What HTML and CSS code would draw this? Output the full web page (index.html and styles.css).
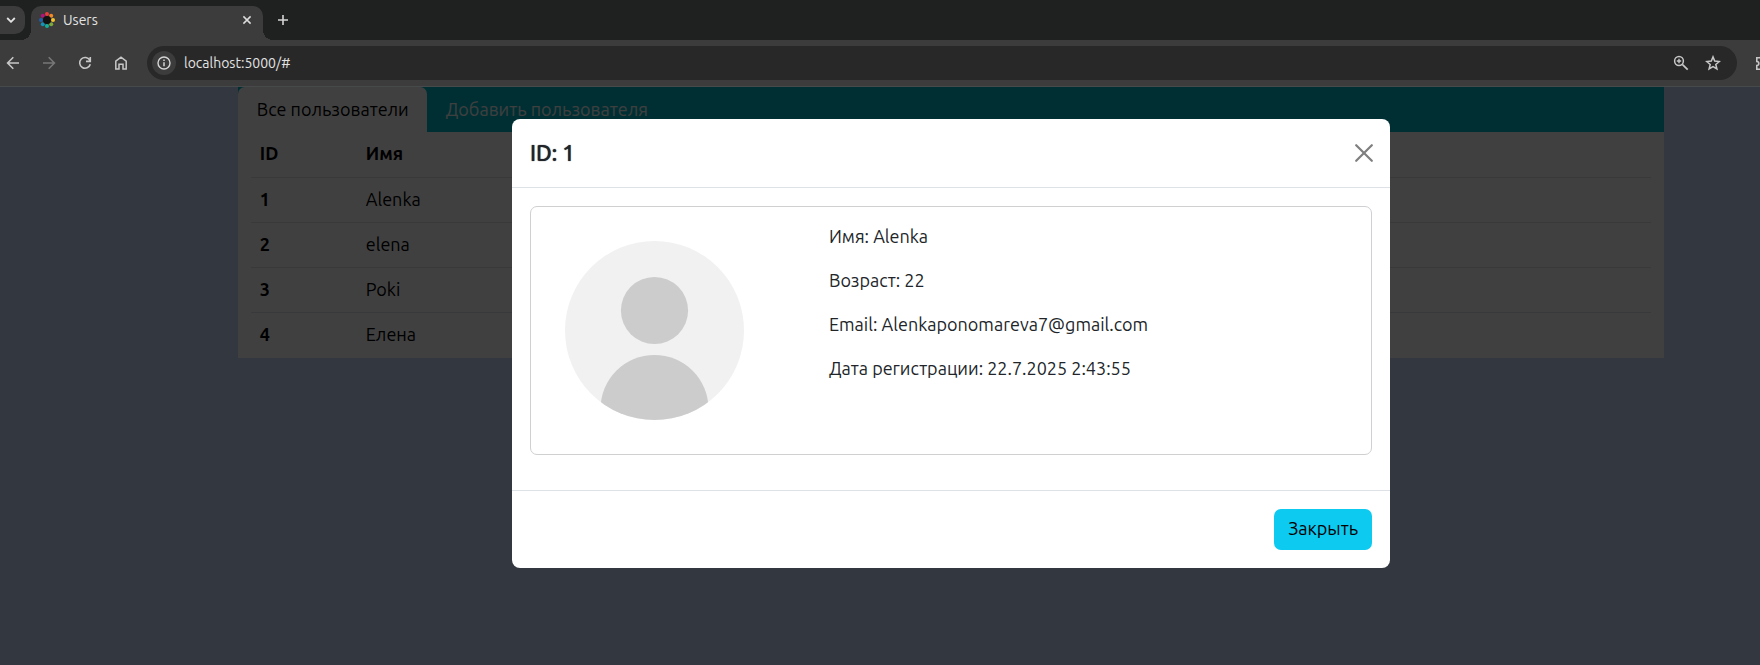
FILE: index.html
```html
<!DOCTYPE html>
<html lang="ru">
<head>
<meta charset="utf-8">
<title>Users</title>
<link rel="stylesheet" href="styles.css">
</head>
<body>
<div class="window">
  <header class="browser">
    <div class="tabstrip">
      <button class="tab-search" aria-label="Поиск вкладок"><svg width="10" height="6" viewBox="0 0 10 6"><path d="M1.200 1l3.800 3.800L8.800 1" fill="none" stroke="#e3e3e3" stroke-width="1.800"/></svg></button>
      <div class="browser-tab">
        <svg width="16" height="16" viewBox="0 0 16 16">
          <circle cx="8" cy="2" r="2" fill="#ea3a3c"/>
          <circle cx="12.200" cy="3.800" r="2" fill="#f08a24"/>
          <circle cx="14" cy="8" r="2" fill="#f5c52b"/>
          <circle cx="12.200" cy="12.200" r="2" fill="#7da83a"/>
          <circle cx="8" cy="14" r="2" fill="#12b09a"/>
          <circle cx="3.800" cy="12.200" r="2" fill="#1192b8"/>
          <circle cx="2" cy="8" r="2" fill="#1f5fa8"/>
          <circle cx="3.800" cy="3.800" r="2" fill="#b5127c"/>
          <circle cx="8" cy="8" r="4" fill="#111"/>
        </svg>
        <span class="browser-tab-title">Users</span>
        <button class="icon-button small" aria-label="Закрыть вкладку"><svg width="10" height="10" viewBox="0 0 10 10"><path d="M1.400 1.400l7.200 7.200M8.600 1.400L1.400 8.600" stroke="#dcdcdc" stroke-width="1.500"/></svg></button>
      </div>
      <button class="icon-button new-tab" aria-label="Новая вкладка"><svg width="12" height="12" viewBox="0 0 12 12"><path d="M6 1v10M1 6h10" stroke="#d5d5d5" stroke-width="1.600"/></svg></button>
    </div>
    <div class="toolbar">
      <div class="toolbar-nav">
        <button class="icon-button" aria-label="Назад"><svg width="14" height="14" viewBox="0 0 14 14"><path d="M13 7H2M7.300 1.300L1.600 7l5.700 5.700" fill="none" stroke="#c7c7c7" stroke-width="1.600"/></svg></button>
        <button class="icon-button" aria-label="Вперёд"><svg width="14" height="14" viewBox="0 0 14 14"><path d="M1 7h11M6.700 1.300L12.400 7l-5.700 5.700" fill="none" stroke="#777" stroke-width="1.600"/></svg></button>
        <button class="icon-button" aria-label="Обновить"><svg width="14" height="14" viewBox="0 0 14 14"><path d="M11.800 4.200A5.400 5.400 0 1 0 12.300 8.300M12.300 1v4.400H8" fill="none" stroke="#c7c7c7" stroke-width="1.600"/></svg></button>
        <button class="icon-button" aria-label="Главная"><svg width="14" height="14" viewBox="0 0 14 14"><path d="M1.800 5.200L7 1.200l5.200 4v7.900H9V8.300H5v4.800H1.800z" fill="none" stroke="#c7c7c7" stroke-width="1.500"/></svg></button>
      </div>
      <div class="omnibox">
        <button class="site-info" aria-label="Сведения о сайте"><svg width="14" height="14" viewBox="0 0 14 14"><circle cx="7" cy="7" r="6" fill="none" stroke="#d5d5d5" stroke-width="1.400"/><path d="M7 6.300v4M7 3.500v1.500" stroke="#d5d5d5" stroke-width="1.500"/></svg></button>
        <input class="address" type="text" aria-label="Адрес" value="localhost:5000/#">
        <button class="icon-button" aria-label="Масштаб"><svg width="16" height="16" viewBox="0 0 16 16"><circle cx="6" cy="6" r="4.400" fill="none" stroke="#c7c7c7" stroke-width="1.500"/><path d="M9.300 9.300l5.400 5.400" stroke="#c7c7c7" stroke-width="1.700"/><path d="M6 3.800v4.400M3.800 6h4.400" stroke="#c7c7c7" stroke-width="1.400"/></svg></button>
        <button class="icon-button" aria-label="Добавить в закладки"><svg width="16" height="16" viewBox="0 0 16 16"><path d="M8 1.900l1.700 4.200 4.600.4-3.500 3 1.100 4.500L8 11.600 4.100 14l1.100-4.500-3.500-3 4.600-.4z" fill="none" stroke="#c7c7c7" stroke-width="1.500"/></svg></button>
      </div>
      <div class="extensions">
        <button class="icon-button" aria-label="Расширения"><svg width="16" height="16" viewBox="0 0 16 16"><path d="M1.800 2.800h3.700a1.800 1.800 0 0 1 3.600 0h3.600v3.900a1.800 1.800 0 0 1 0 3.600v3.900H1.800v-3.700a2 2 0 0 0 0-4z" fill="none" stroke="#c7c7c7" stroke-width="1.600"/></svg></button>
      </div>
    </div>
  </header>

  <div class="page">
    <main class="container">
      <nav class="tabs">
        <a class="tab active" href="#">Все пользователи</a>
        <a class="tab" href="#">Добавить пользователя</a>
      </nav>
      <div class="table-wrap">
        <table class="users">
          <thead><tr><th class="col-id" scope="col">ID</th><th scope="col">Имя</th></tr></thead>
          <tbody>
            <tr><th scope="row">1</th><td>Alenka</td></tr>
            <tr><th scope="row">2</th><td>elena</td></tr>
            <tr><th scope="row">3</th><td>Poki</td></tr>
            <tr><th scope="row">4</th><td>Елена</td></tr>
          </tbody>
        </table>
      </div>
    </main>

    <div class="backdrop">
      <section class="modal" role="dialog" aria-modal="true" aria-labelledby="modal-title">
        <header class="modal-header">
          <h1 class="modal-title" id="modal-title">ID: 1</h1>
          <button class="modal-close" aria-label="Закрыть окно"><svg width="18" height="18" viewBox="0 0 18 18"><path d="M1.200 1.200l15.600 15.600M16.800 1.200L1.200 16.800" stroke="#7f7f7f" stroke-width="2.200" stroke-linecap="round"/></svg></button>
        </header>
        <div class="modal-body">
          <article class="card">
            <div class="card-photo">
              <svg width="247" height="247" viewBox="0 0 247 247" role="img" aria-label="Аватар">
                <clipPath id="disc"><circle cx="123.500" cy="123.500" r="89.500"/></clipPath>
                <circle cx="123.500" cy="123.500" r="89.500" fill="#f1f1f1"/>
                <circle cx="123.500" cy="103.500" r="33.600" fill="#ccc"/>
                <circle cx="123.500" cy="202" r="54" fill="#ccc" clip-path="url(#disc)"/>
              </svg>
            </div>
            <div class="card-text">
              <p>Имя: Alenka</p>
              <p>Возраст: 22</p>
              <p>Email: Alenkaponomareva7@gmail.com</p>
              <p>Дата регистрации: 22.7.2025 2:43:55</p>
            </div>
          </article>
        </div>
        <footer class="modal-footer">
          <button class="btn">Закрыть</button>
        </footer>
      </section>
    </div>
  </div>
</div>
</body>
</html>
```
FILE: styles.css
```css
* { box-sizing: border-box; }

html { height: 100%; overflow: hidden; }

body {
  margin: 0;
  height: 100%;
  overflow: hidden;
  font-family: Ubuntu, "Noto Sans", "Open Sans", sans-serif;
  font-size: 18px;
  line-height: 26px;
  color: #212529;
}

button {
  border: 0;
  padding: 0;
  background: none;
  font: inherit;
  cursor: pointer;
}

/* The window runs past the right edge of the screen. */
.window {
  display: flex;
  flex-direction: column;
  width: calc(100% + 142px);
  min-height: 100%;
}

/* Browser chrome */
.browser { background: #3c3c3c; border-bottom: 1px solid #474a4a; }

.tabstrip {
  display: flex;
  align-items: center;
  height: 40px;
  background: #1f2120;
}

.tab-search {
  width: 25px;
  height: 28px;
  padding-right: 3px;
  border-radius: 0 10px 10px 0;
  background: #3c3c3c;
  display: grid;
  place-items: center;
}

.browser-tab {
  position: relative;
  align-self: flex-end;
  display: flex;
  align-items: center;
  gap: 8px;
  width: 232px;
  height: 34px;
  margin-left: 6px;
  padding: 0 6px 6px 8px;
  border-radius: 10px 10px 0 0;
  background: #3c3c3c;
}

.browser-tab::before,
.browser-tab::after {
  content: "";
  position: absolute;
  bottom: 0;
  width: 10px;
  height: 10px;
}

.browser-tab::before {
  right: 100%;
  background: radial-gradient(circle at 0 0, transparent 10px, #3c3c3c 10px);
}

.browser-tab::after {
  left: 100%;
  background: radial-gradient(circle at 100% 0, transparent 10px, #3c3c3c 10px);
}

.browser-tab-title {
  flex: 1;
  font-size: 14px;
  line-height: 20px;
  color: #e3e3e3;
}

.icon-button {
  flex: none;
  width: 26px;
  height: 26px;
  display: grid;
  place-items: center;
}

.icon-button.small { width: 20px; height: 20px; }

.new-tab { margin-left: 7px; }

.toolbar { display: flex; align-items: center; height: 46px; }

.toolbar-nav { display: flex; gap: 10px; }

.omnibox {
  flex: 1;
  display: flex;
  align-items: center;
  gap: 6px;
  height: 34px;
  margin-left: 13px;
  padding: 0 11px 0 5px;
  border-radius: 17px;
  background: #282828;
}

.site-info {
  flex: none;
  display: grid;
  place-items: center;
  width: 24px;
  height: 24px;
  border-radius: 50%;
  background: #3c3c3c;
}

.address {
  flex: 1;
  min-width: 0;
  border: 0;
  padding: 0 2px;
  background: none;
  outline: none;
  font: inherit;
  font-size: 14px;
  line-height: 20px;
  color: #e3e3e3;
}

.extensions { width: 165px; padding-left: 13px; }

/* Page */
.page {
  position: relative;
  flex: 1;
  background: #ccdcfc;
}

.container { width: 75%; margin: 0 auto; }

.tabs {
  display: flex;
  height: 45px;
  background: #00bccc;
}

.tab {
  padding: 9px 18px 10px 19px;
  border-radius: 7px 7px 0 0;
  color: #f8f9fa;
  text-decoration: none;
}

.tab.active { background: #fff; color: #000; }

.table-wrap { padding: 0 13px; background: #fff; }

.users {
  width: 100%;
  border-collapse: collapse;
  text-align: left;
  color: #000;
}

.users th,
.users td {
  height: 45px;
  padding: 8px 9px 10px;
  border-bottom: 1px solid #dee2e6;
}

.users tbody tr:last-child > * { border-bottom-color: transparent; }

.col-id { width: 106px; }

/* Modal */
.backdrop {
  position: absolute;
  inset: 0;
  padding: 32px 16px;
  background: rgba(0, 0, 0, 0.75);
}

.modal {
  max-width: 878px;
  margin: 0 auto;
  border-radius: 8px;
  background: #fff;
}

.modal-header {
  display: flex;
  align-items: center;
  justify-content: space-between;
  height: 69px;
  padding: 0 17px 0 18px;
  border-bottom: 1px solid #dee2e6;
}

.modal-title {
  margin: 0;
  padding-bottom: 2px;
  font-size: 22px;
  font-weight: 500;
  line-height: 33px;
  text-shadow: 0 0 1px #212529;
}

.modal-close { display: grid; }

.modal-body { padding: 18px 18px 35px; }

.card {
  display: flex;
  border: 1px solid #ced0d2;
  border-radius: 7px;
}

.card-photo { flex: 0 0 33.333%; }

.card-photo svg { display: block; }

.card-text { flex: 1; padding: 16px 18px; }

.card-text p { margin: 0 0 18px; }

.modal-footer {
  display: flex;
  justify-content: flex-end;
  padding: 18px;
  border-top: 1px solid #dee2e6;
}

.btn {
  padding: 6px 14px 9px;
  border-radius: 7px;
  background: #0dcaf0;
  color: #000;
}
```
